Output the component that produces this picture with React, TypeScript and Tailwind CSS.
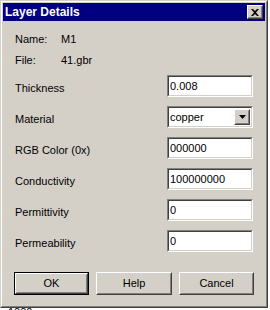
import React from 'react';

const font = { fontFamily: '"Liberation Sans", Arial, sans-serif' };

function Sunken({ children, className = '' }: { children: React.ReactNode; className?: string }) {
  return (
    <div className={`border border-t-[#808080] border-l-[#808080] border-r-white border-b-white ${className}`}>
      <div className="h-full border border-t-[#404040] border-l-[#404040] border-r-[#d4d0c8] border-b-[#d4d0c8] bg-white flex items-center">
        {children}
      </div>
    </div>
  );
}

function Raised({ children, className = '' }: { children: React.ReactNode; className?: string }) {
  return (
    <div className={`border border-t-white border-l-white border-r-[#404040] border-b-[#404040] bg-[#d4d0c8] ${className}`}>
      <div className="h-full border border-t-[#d4d0c8] border-l-[#d4d0c8] border-r-[#808080] border-b-[#808080] flex items-center justify-center">
        {children}
      </div>
    </div>
  );
}

const rows: { label: string; value: string; select?: boolean }[] = [
  { label: 'Thickness', value: '0.008' },
  { label: 'Material', value: 'copper', select: true },
  { label: 'RGB Color (0x)', value: '000000' },
  { label: 'Conductivity', value: '100000000' },
  { label: 'Permittivity', value: '0' },
  { label: 'Permeability', value: '0' },
];

export default function App() {
  return (
    <div className="w-[270px] h-[310px] bg-white overflow-hidden text-black text-[11px]" style={font}>
      {/* Window frame */}
      <div className="w-[268px] h-[308px] border border-t-[#d4d0c8] border-l-[#d4d0c8] border-r-[#404040] border-b-[#404040]">
        <div className="h-full border border-t-white border-l-white border-r-[#808080] border-b-[#808080] bg-[#d4d0c8] p-px flex flex-col">
          {/* Title bar */}
          <div className="h-[18px] bg-[#000080] flex items-center pl-[2px] pr-[2px]">
            <span className="text-white font-bold text-[12px] leading-none flex-1">Layer Details</span>
            <Raised className="w-[16px] h-[14px]">
              <svg width="8" height="7" viewBox="0 0 8 7">
                <path d="M0 0h2l2 2 2-2h2L5 3.5 8 7H6L4 5 2 7H0l3-3.5z" fill="#000" />
              </svg>
            </Raised>
          </div>

          {/* Info */}
          <div className="pl-3 mt-[12px] flex flex-col gap-[8px] leading-[13px]">
            <div className="flex">
              <span className="w-[46px]">Name:</span>
              <span>M1</span>
            </div>
            <div className="flex">
              <span className="w-[46px]">File:</span>
              <span>41.gbr</span>
            </div>
          </div>

          {/* Fields */}
          <div className="mt-[8px] flex flex-col gap-[9px]">
            {rows.map((r) => (
              <div key={r.label} className="flex items-center h-[22px]">
                <span className="pl-3 mt-1 w-[164px] leading-[13px]">{r.label}</span>
                <Sunken className="w-[86px] h-[22px]">
                  <span className="pl-[1px] flex-1 leading-[13px]">{r.value}</span>
                  {r.select && (
                    <Raised className="w-[16px] h-[16px] mr-px">
                      <svg width="7" height="4" viewBox="0 0 7 4">
                        <path d="M0 0h7L3.5 4z" fill="#000" />
                      </svg>
                    </Raised>
                  )}
                </Sunken>
              </div>
            ))}
          </div>

          {/* Buttons */}
          <div className="mt-[20px] pl-[11px] flex gap-[7px]">
            <div className="w-[75px] h-[23px] border border-black">
              <Raised className="h-full">OK</Raised>
            </div>
            <Raised className="w-[76px] h-[23px]">Help</Raised>
            <Raised className="w-[75px] h-[23px]">Cancel</Raised>
          </div>
        </div>
      </div>
      <div className="pl-[8px] leading-[11px] text-[11px] -mt-[1px]">1000</div>
    </div>
  );
}
